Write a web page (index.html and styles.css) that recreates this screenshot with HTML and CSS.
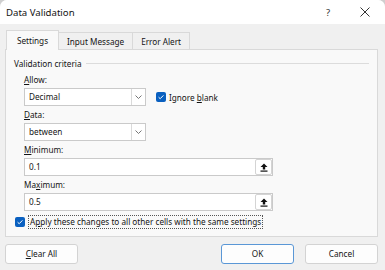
FILE: index.html
```html
<!DOCTYPE html>
<html>
<head>
<meta charset="utf-8">
<link rel="stylesheet" href="styles.css">
</head>
<body>
<div class="dialog">
  <div class="titlebar">
    <span class="title">Data Validation</span>
    <span class="help">?</span>
    <svg class="close" width="10" height="10" viewBox="0 0 10 10"><path d="M0.5 0.5 L9.5 9.5 M9.5 0.5 L0.5 9.5" stroke="#333" stroke-width="1"/></svg>
  </div>
  <div class="content">
    <div class="tabs">
      <div class="tab active">Settings</div>
      <div class="tab">Input Message</div>
      <div class="tab">Error Alert</div>
    </div>
    <div class="panel">
      <div class="group-head"><span>Validation criteria</span><div class="rule"></div></div>
      <div class="fields">
        <div class="label"><u>A</u>llow:</div>
        <div class="row">
          <div class="select"><span class="value">Decimal</span><span class="arrow"><svg width="7" height="4" viewBox="0 0 7 4"><path d="M0.5 0.5 L3.5 3.5 L6.5 0.5" fill="none" stroke="#666" stroke-width="0.9"/></svg></span></div>
          <label class="check-row ignore"><span class="checkbox"><svg width="10" height="10" viewBox="0 0 10 10"><path d="M2.6 5.2 L4.2 6.7 L7.4 3.4" fill="none" stroke="#fff" stroke-width="1"/></svg></span><span>Ignore <u>b</u>lank</span></label>
        </div>
        <div class="label"><u>D</u>ata:</div>
        <div class="row">
          <div class="select"><span class="value">between</span><span class="arrow"><svg width="7" height="4" viewBox="0 0 7 4"><path d="M0.5 0.5 L3.5 3.5 L6.5 0.5" fill="none" stroke="#666" stroke-width="0.9"/></svg></span></div>
        </div>
        <div class="label"><u>M</u>inimum:</div>
        <div class="row">
          <div class="input"><span class="value">0.1</span><span class="ref"><svg width="8" height="9" viewBox="0 0 8 9"><path d="M4 0.5 L7.5 4 L5.2 4 L5.2 6.5 L2.8 6.5 L2.8 4 L0.5 4 Z" fill="#111"/><rect x="0.5" y="7.5" width="7" height="1.2" fill="#111"/></svg></span></div>
        </div>
        <div class="label">Ma<u>x</u>imum:</div>
        <div class="row">
          <div class="input"><span class="value">0.5</span><span class="ref"><svg width="8" height="9" viewBox="0 0 8 9"><path d="M4 0.5 L7.5 4 L5.2 4 L5.2 6.5 L2.8 6.5 L2.8 4 L0.5 4 Z" fill="#111"/><rect x="0.5" y="7.5" width="7" height="1.2" fill="#111"/></svg></span></div>
        </div>
      </div>
      <label class="check-row apply"><span class="checkbox"><svg width="10" height="10" viewBox="0 0 10 10"><path d="M2.6 5.2 L4.2 6.7 L7.4 3.4" fill="none" stroke="#fff" stroke-width="1"/></svg></span><span class="focus">A<u>p</u>ply these changes to all other cells with the same settings</span></label>
    </div>
    <div class="buttons">
      <div class="btn clear"><u>C</u>lear All</div>
      <div class="spacer"></div>
      <div class="btn ok">OK</div>
      <div class="btn cancel">Cancel</div>
    </div>
  </div>
</div>
</body>
</html>
```
FILE: styles.css
```css
html, body {
  margin: 0;
  padding: 0;
  background: #cfcfcf;
}
body {
  width: 385px;
  height: 270px;
  overflow: hidden;
  font-family: "Noto Sans", "Open Sans", sans-serif;
  font-size: 8.2px;
  color: #141414;
}
u {
  text-decoration-thickness: 1px;
  text-underline-offset: 1px;
}
.dialog {
  width: 385px;
  height: 270px;
  background: #f0f0f0;
  border-radius: 7px 7px 0 0;
  overflow: hidden;
}
.titlebar {
  height: 24px;
  background: #ffffff;
  display: flex;
  align-items: center;
  padding-left: 6px;
  box-sizing: border-box;
}
.title {
  font-size: 9.6px;
  flex: 1;
}
.help {
  font-size: 9.5px;
  color: #333;
  margin-right: 30px;
}
.close {
  margin-right: 15px;
}
.content {
  padding: 6px 7px 0 5px;
}
.tabs {
  display: flex;
  align-items: flex-end;
  height: 19px;
  padding-left: 1px;
}
.tab {
  height: 17px;
  line-height: 17px;
  padding: 0 8px;
  border: 1px solid #d9d9d9;
  border-bottom: none;
  border-left: none;
  background: #f0f0f0;
  box-sizing: border-box;
}
.tab:first-child {
  border-left: 1px solid #d9d9d9;
}
.tab.active {
  width: 53px;
  height: 20px;
  line-height: 19px;
  background: #f9f9f9;
  padding: 0;
  text-align: center;
  margin-bottom: -1px;
  position: relative;
  z-index: 1;
}
.panel {
  height: 188px;
  border: 1px solid #d9d9d9;
  background: #f9f9f9;
  box-sizing: border-box;
  padding: 7px 8px 0 8px;
}
.group-head {
  display: flex;
  align-items: center;
  height: 12px;
}
.group-head span {
  padding-right: 4px;
}
.rule {
  flex: 1;
  height: 1px;
  background: #dcdcdc;
}
.fields {
  padding-left: 10px;
  padding-top: 5px;
}
.label {
  height: 12px;
  line-height: 12px;
  margin-bottom: 2px;
}
.row {
  display: flex;
  align-items: center;
  margin-bottom: 3px;
}
.select {
  width: 122px;
  height: 18px;
  border: 1px solid #cacaca;
  background: #fff;
  display: flex;
  box-sizing: border-box;
}
.value {
  flex: 1;
  line-height: 16px;
  padding-left: 4px;
}
.arrow {
  width: 13px;
  border-left: 1px solid #dadada;
  display: flex;
  align-items: center;
  justify-content: center;
}
.input {
  width: 249px;
  height: 18px;
  border: 1px solid #cacaca;
  background: #fff;
  display: flex;
  box-sizing: border-box;
}
.ref {
  width: 17px;
  border: 1px solid #d4d4d4;
  border-radius: 2px;
  display: flex;
  align-items: center;
  justify-content: center;
  background: #fff;
  box-sizing: border-box;
}
.check-row {
  display: flex;
  align-items: center;
}
.checkbox {
  width: 10px;
  height: 10px;
  background: #0a60c0;
  border-radius: 2px;
  display: flex;
  margin-right: 3px;
}
.ignore {
  margin-left: 10px;
}
.apply {
  margin-top: 4px;
  margin-left: 1px;
}
.focus {
  border: 1px dotted #555;
  padding: 0 1px;
  line-height: 12px;
}
.buttons {
  display: flex;
  margin-top: 7px;
  gap: 11px;
}
.spacer {
  flex: 1;
}
.btn {
  width: 73px;
  height: 20px;
  line-height: 18px;
  text-align: center;
  background: #fdfdfd;
  border: 1px solid #d3d3d3;
  border-radius: 3px;
  box-sizing: border-box;
}
.ok {
  border-color: #5a97d6;
}
```
